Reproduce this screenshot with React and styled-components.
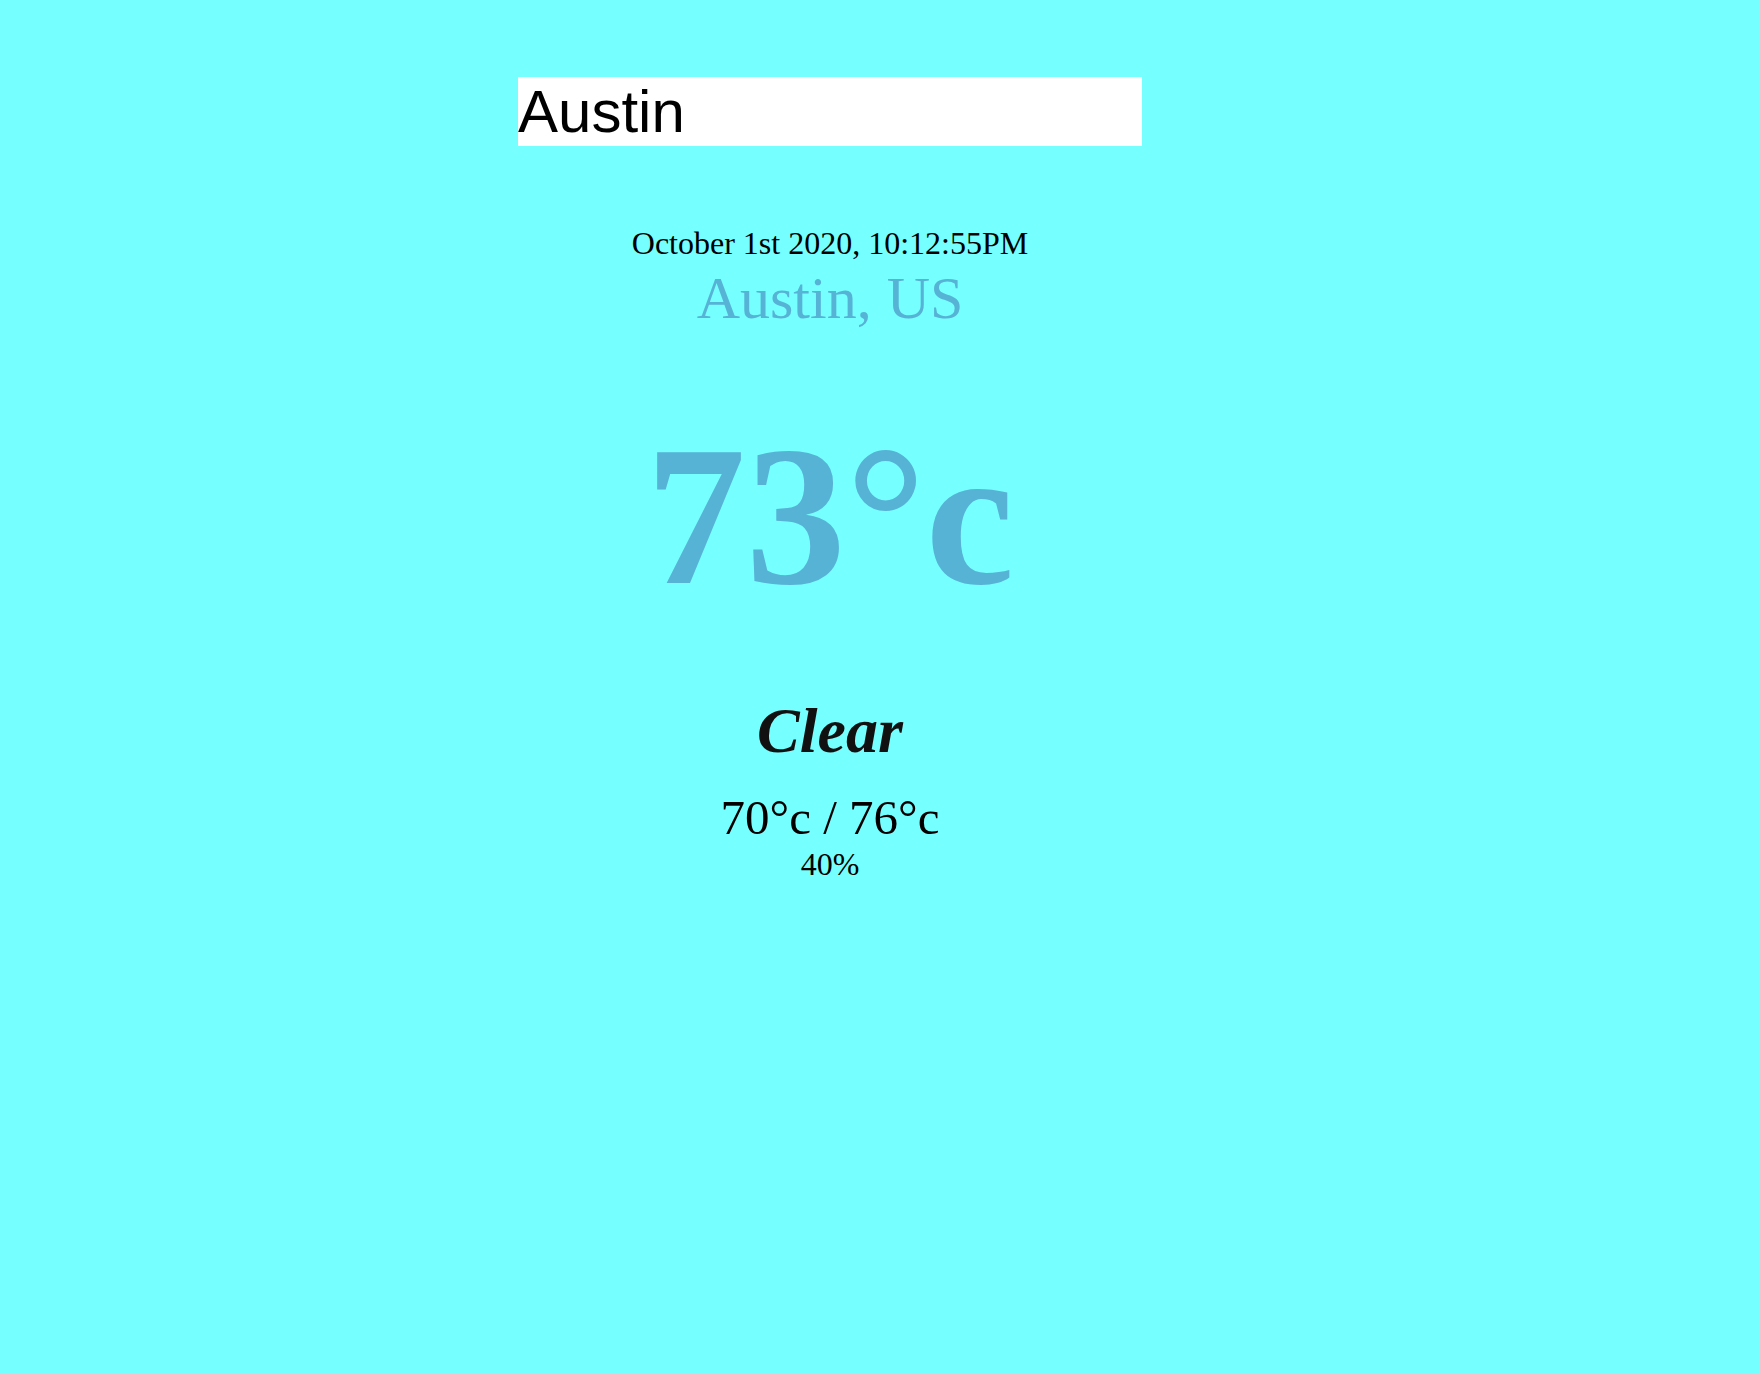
import React, { useEffect, useRef, useState } from 'react';
import styled, { createGlobalStyle } from 'styled-components';

const GlobalStyle = createGlobalStyle`
  html, body {
    margin: 0;
    padding: 0;
    background-color: #76ffff;
    font-family: "Liberation Serif", "Times New Roman", serif;
  }
`;

const AppContainer = styled.div`
  width: 1660px;
  min-height: 1374px;
  padding-top: 77px;
  box-sizing: border-box;

  .searchBox {
    display: block;
    width: 624px;
    height: 69px;
    margin: 0 auto;
    padding: 0;
    border: none;
    outline: none;
    background-color: #fff;
    color: #000;
    caret-color: #000;
    font-family: "Liberation Sans", Arial, sans-serif;
    font-size: 60px;
  }
`;

const LocationBox = styled.div`
  margin-top: 79px;
  text-align: center;

  .date {
    font-size: 32px;
    color: #000;
  }

  .location {
    margin-top: 2px;
    font-size: 60px;
    color: #57b3d6;
  }
`;

const WeatherBox = styled.div`
  text-align: center;

  .temp {
    margin-top: 68px;
    font-size: 200px;
    font-weight: bold;
    color: #57b3d6;
  }

  .condition {
    margin-top: 64px;
    font-size: 64px;
    font-weight: bold;
    font-style: italic;
    color: #111;
  }

  .range {
    margin-top: 21px;
    font-size: 49px;
    color: #000;
  }

  .humidity {
    font-size: 32px;
    color: #000;
  }
`;

const weather = {
  date: 'October 1st 2020, 10:12:55PM',
  name: 'Austin',
  country: 'US',
  temp: 73,
  main: 'Clear',
  min: 70,
  max: 76,
  humidity: 40,
};

const SearchBox = () => {
  const [query, setQuery] = useState('Austin');
  const inputRef = useRef(null);

  useEffect(() => {
    const el = inputRef.current;
    if (el) {
      el.focus();
      el.setSelectionRange(el.value.length, el.value.length);
    }
  }, []);

  return (
    <input
      ref={inputRef}
      className="searchBox"
      type="text"
      value={query}
      onChange={(e) => setQuery(e.target.value)}
    />
  );
};

const App = () => {
  return (
    <>
      <GlobalStyle />
      <AppContainer>
        {/* Search */}
        <SearchBox />

        <LocationBox>
          <div className="date">{weather.date}</div>
          <div className="location">
            {weather.name}, {weather.country}
          </div>
        </LocationBox>

        <WeatherBox>
          <div className="temp">{weather.temp}°c</div>
          <div className="condition">{weather.main}</div>
          <div className="range">
            {weather.min}°c / {weather.max}°c
          </div>
          <div className="humidity">{weather.humidity}%</div>
        </WeatherBox>
      </AppContainer>
    </>
  );
};

export default App;
